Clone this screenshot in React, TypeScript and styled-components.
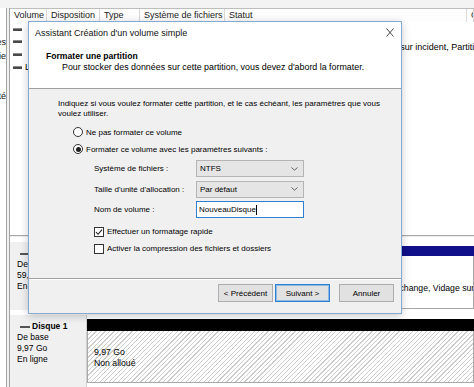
import React from "react";
import styled, { createGlobalStyle } from "styled-components";

const GlobalStyle = createGlobalStyle`
  html, body { margin: 0; padding: 0; background: #fff; }
  body { font-family: "Liberation Sans", Arial, sans-serif; overflow: hidden; }
  * { box-sizing: border-box; }
`;

const Screen = styled.div`
  position: relative;
  width: 474px;
  height: 387px;
  overflow: hidden;
  background: #fff;
  display: flex;
  flex-direction: column;
  color: #000;
  font-size: 9px;
`;

const TopStrip = styled.div`
  height: 8px;
  flex: none;
  background: #f3f3f3;
`;

const Workspace = styled.div`
  flex: 1;
  display: flex;
  min-height: 0;
`;

const TreePane = styled.div`
  width: 7px;
  flex: none;
  background: #fff;
  border-right: 1px solid #a3a3a3;
  overflow: hidden;
  display: flex;
  flex-direction: column;
  align-items: flex-end;
  padding-top: 28px;
`;

const TreeItem = styled.div`
  height: 13.5px;
  line-height: 13.5px;
  white-space: nowrap;
  flex: none;
  color: #111;
`;

const Splitter = styled.div`
  width: 3px;
  flex: none;
  background: #f0f0f0;
  border-right: 1px solid #a3a3a3;
`;

const Content = styled.div`
  flex: 1;
  min-width: 0;
  display: flex;
  flex-direction: column;
`;

const HeaderRow = styled.div`
  height: 14px;
  flex: none;
  display: flex;
  border-top: 1px solid #bdbdbd;
  background: #fdfdfd;
  white-space: nowrap;
  overflow: hidden;
`;

const HeaderCell = styled.div<{ $w?: number }>`
  ${(p) => (p.$w ? `width: ${p.$w}px; flex: none;` : "flex: 1;")}
  padding-left: 4px;
  line-height: 13px;
  border-right: 1px solid #d9d9d9;
  color: #1a1a1a;
  overflow: hidden;
`;

const VolumeList = styled.div`
  height: 213px;
  flex: none;
  background: #fff;
  padding-top: 1px;
  overflow: hidden;
`;

const VolumeRow = styled.div`
  height: 12.6px;
  display: flex;
  align-items: center;
  white-space: nowrap;
`;

const VolCell = styled.div<{ $w?: number; $drop?: number }>`
  ${(p) => (p.$w ? `width: ${p.$w}px; flex: none;` : "flex: 1;")}
  padding-left: 3px;
  overflow: visible;
  display: flex;
  align-items: center;
  gap: 3px;
  ${(p) => (p.$drop ? `padding-top: ${p.$drop}px;` : "")}
`;

const DiskIcon = styled.span`
  display: inline-block;
  width: 9px;
  height: 3px;
  background: #4a4a4a;
  border-top: 1px solid #8a8a8a;
  flex: none;
`;

const PaneDivider = styled.div`
  height: 2px;
  flex: none;
  border-top: 1px solid #a9a9a9;
  background: #ececec;
`;

const DiskPane = styled.div`
  flex: 1;
  min-height: 0;
  background: #fff;
  padding-top: 5px;
  display: flex;
  flex-direction: column;
  gap: 5px;
  overflow: hidden;
`;

const DiskRow = styled.div<{ $h?: number }>`
  display: flex;
  flex: none;
  height: ${(p) => p.$h ?? 72}px;
`;

const DiskLabel = styled.div`
  width: 77px;
  flex: none;
  background: #f0f0f0;
  border-right: 1px solid #d0d0d0;
  padding: 6px 0 0 7px;
  font-size: 8.5px;
  line-height: 11px;
  white-space: nowrap;
  overflow: hidden;
`;

const DiskTitle = styled.div`
  display: flex;
  align-items: center;
  gap: 2px;
  font-weight: bold;
  padding-left: 3px;
`;

const DashIcon = styled.span`
  display: inline-block;
  width: 10px;
  height: 2px;
  background: #555;
`;

const Partitions = styled.div`
  flex: 1;
  min-width: 0;
  display: flex;
  padding-top: 4px;
`;

const Partition = styled.div<{ $w?: number }>`
  ${(p) => (p.$w ? `width: ${p.$w}px; flex: none;` : "flex: 1;")}
  display: flex;
  flex-direction: column;
  min-width: 0;
`;

const PartBar = styled.div<{ $color: string; $h: number }>`
  height: ${(p) => p.$h}px;
  flex: none;
  background: ${(p) => p.$color};
`;

const PartBody = styled.div<{ $hatched?: boolean; $h: number; $pt: number }>`
  height: ${(p) => p.$h}px;
  flex: none;
  border: 1px solid #a8a8a8;
  border-top: none;
  padding: ${(p) => p.$pt}px 0 0 6px;
  font-size: 8.7px;
  line-height: 11px;
  white-space: nowrap;
  overflow: hidden;
  background: ${(p) =>
    p.$hatched
      ? "repeating-linear-gradient(135deg, #ffffff 0px, #ffffff 2.3px, #cdcdcd 2.3px, #cdcdcd 3.2px)"
      : "#fff"};
`;

/* ---------- Dialog ---------- */

const Dialog = styled.div`
  position: absolute;
  left: 28px;
  top: 21px;
  width: 374px;
  height: 293px;
  border: 1px solid #84a9d4;
  background: #f0f0f0;
  box-shadow: 0 2px 8px rgba(0, 0, 0, 0.22);
  display: flex;
  flex-direction: column;
`;

const TitleBar = styled.div`
  height: 21px;
  flex: none;
  background: #fff;
  display: flex;
  align-items: center;
  justify-content: space-between;
  padding: 0 7px 0 6px;
  font-size: 9px;
  color: #111;
`;

const CloseGlyph = styled.svg`
  width: 8px;
  height: 9px;
  display: block;
`;

const WizardHeader = styled.div`
  height: 46px;
  flex: none;
  background: #fff;
  border-bottom: 1px solid #a0a0a0;
  padding: 8px 0 0 17px;
`;

const WizardTitle = styled.div`
  font-weight: bold;
  font-size: 8.6px;
  line-height: 11px;
`;

const WizardSubtitle = styled.div`
  font-size: 8.9px;
  line-height: 11px;
  padding-left: 16px;
`;

const WizardBody = styled.div`
  flex: 1;
  min-height: 0;
  padding: 10px 14px 0 29px;
  font-size: 8px;
  display: flex;
  flex-direction: column;
`;

const Description = styled.div`
  line-height: 9.5px;
`;

const OptionGroup = styled.div<{ $mt: number; $pl: number }>`
  margin-top: ${(p) => p.$mt}px;
  padding-left: ${(p) => p.$pl}px;
  display: flex;
  flex-direction: column;
  gap: 4px;
`;

const OptionRow = styled.label`
  height: 13px;
  display: flex;
  align-items: center;
  gap: 3px;
  white-space: nowrap;
`;

const RadioCircle = styled.span<{ $checked?: boolean }>`
  width: 10px;
  height: 10px;
  border-radius: 50%;
  border: 1px solid #333;
  background: #fff;
  flex: none;
  display: flex;
  align-items: center;
  justify-content: center;
  &::after {
    content: "";
    width: 5px;
    height: 5px;
    border-radius: 50%;
    background: ${(p) => (p.$checked ? "#222" : "transparent")};
  }
`;

const CheckBox = styled.span`
  width: 10px;
  height: 10px;
  border: 1px solid #333;
  background: #fff;
  flex: none;
  display: flex;
  align-items: center;
  justify-content: center;
`;

const FormGrid = styled.div`
  margin-top: 4.5px;
  padding-left: 36px;
  display: grid;
  grid-template-columns: 102px 108px;
  grid-auto-rows: 17px;
  row-gap: 3.5px;
  align-items: center;
  white-space: nowrap;
`;

const Combo = styled.div`
  height: 17px;
  border: 1px solid #b5b5b5;
  background: #e5e5e5;
  display: flex;
  align-items: center;
  justify-content: space-between;
  padding: 0 5px 0 3px;
`;

const TextField = styled.div`
  height: 17px;
  border: 1px solid #2f7fd0;
  background: #fff;
  display: flex;
  align-items: center;
  padding-left: 2px;
`;

const Caret = styled.span`
  display: inline-block;
  width: 1px;
  height: 10px;
  background: #000;
  margin-left: 0.5px;
`;

const Footer = styled.div`
  height: 35px;
  flex: none;
  border-top: 1px solid #a0a0a0;
  box-shadow: inset 0 1px 0 #fff;
  display: flex;
  justify-content: flex-end;
  align-items: flex-start;
  padding: 5px 7px 0 0;
  gap: 2px;
`;

const Button = styled.div<{ $default?: boolean; $gapLeft?: number }>`
  width: 55px;
  height: 18px;
  font-size: 8px;
  background: #e1e1e1;
  border: 1px solid ${(p) => (p.$default ? "#2f7fd0" : "#adadad")};
  box-shadow: ${(p) => (p.$default ? "inset 0 0 0 1px #8dbbe8" : "none")};
  display: flex;
  align-items: center;
  justify-content: center;
  white-space: nowrap;
  margin-left: ${(p) => p.$gapLeft ?? 0}px;
`;

const Chevron = () => (
  <svg width="7" height="4" viewBox="0 0 7 4">
    <path d="M0.5 0.5 L3.5 3.2 L6.5 0.5" fill="none" stroke="#555" strokeWidth="0.9" />
  </svg>
);

const CheckMark = () => (
  <svg width="8" height="8" viewBox="0 0 8 8">
    <path d="M1 4.2 L3.1 6.3 L7 1.6" fill="none" stroke="#222" strokeWidth="1.1" />
  </svg>
);

export default function App() {
  return (
    <>
      <GlobalStyle />
      <Screen>
        <TopStrip />
        <Workspace>
          <TreePane>
            <TreeItem>Services</TreeItem>
            <TreeItem>Stratégie</TreeItem>
            <TreeItem>&nbsp;</TreeItem>
            <TreeItem>&nbsp;</TreeItem>
            <TreeItem>Sécurité</TreeItem>
          </TreePane>
          <Splitter />
          <Content>
            <HeaderRow>
              <HeaderCell $w={37}>Volume</HeaderCell>
              <HeaderCell $w={53}>Disposition</HeaderCell>
              <HeaderCell $w={40}>Type</HeaderCell>
              <HeaderCell $w={85}>Système de fichiers</HeaderCell>
              <HeaderCell $w={242}>Statut</HeaderCell>
              <HeaderCell>Capacité</HeaderCell>
            </HeaderRow>
            <VolumeList>
              <VolumeRow>
                <VolCell $w={37}>
                  <DiskIcon />
                </VolCell>
              </VolumeRow>
              <VolumeRow>
                <VolCell $w={37}>
                  <DiskIcon />
                </VolCell>
                <VolCell $w={53}>Simple</VolCell>
                <VolCell $w={40}>De base</VolCell>
                <VolCell $w={85}>NTFS</VolCell>
                <VolCell $drop={10}>
                  Sain (Démarrer, Fichier d'échange, Vidage sur incident, Partition principale)
                </VolCell>
              </VolumeRow>
              <VolumeRow>
                <VolCell $w={37}>
                  <DiskIcon />
                </VolCell>
              </VolumeRow>
              <VolumeRow>
                <VolCell $w={37}>
                  <DiskIcon />
                  Lecteur
                </VolCell>
              </VolumeRow>
            </VolumeList>
            <PaneDivider />
            <DiskPane>
              <DiskRow $h={68}>
                <DiskLabel>
                  <DiskTitle>
                    <DashIcon />
                    Disque 0
                  </DiskTitle>
                  <div>De base</div>
                  <div>59,51 Go</div>
                  <div>En ligne</div>
                </DiskLabel>
                <Partitions>
                  <Partition $w={202}>
                    <PartBar $color="#10108a" $h={10} />
                    <PartBody $h={53} $pt={4.5}>
                      <div>Réservé au système</div>
                      <div>500 Mo NTFS</div>
                      <div>Sain (Système, Actif, Partition principale)</div>
                    </PartBody>
                  </Partition>
                  <Partition>
                    <PartBar $color="#10108a" $h={10} />
                    <PartBody $h={53} $pt={4.5}>
                      <div>(C:)</div>
                      <div>59,02 Go NTFS</div>
                      <div>Sain (Démarrer, Fichier d'échange, Vidage sur incident, Partition principale)</div>
                    </PartBody>
                  </Partition>
                </Partitions>
              </DiskRow>
              <DiskRow $h={72}>
                <DiskLabel>
                  <DiskTitle>
                    <DashIcon />
                    Disque 1
                  </DiskTitle>
                  <div>De base</div>
                  <div>9,97 Go</div>
                  <div>En ligne</div>
                </DiskLabel>
                <Partitions>
                  <Partition>
                    <PartBar $color="#000" $h={12} />
                    <PartBody $hatched $h={52} $pt={16}>
                      <div>9,97 Go</div>
                      <div>Non alloué</div>
                    </PartBody>
                  </Partition>
                </Partitions>
              </DiskRow>
            </DiskPane>
          </Content>
        </Workspace>

        <Dialog>
          <TitleBar>
            <span>Assistant Création d'un volume simple</span>
            <CloseGlyph viewBox="0 0 8 9">
              <path d="M0.5 0.5 L7.5 8.5 M7.5 0.5 L0.5 8.5" stroke="#333" strokeWidth="0.9" fill="none" />
            </CloseGlyph>
          </TitleBar>
          <WizardHeader>
            <WizardTitle>Formater une partition</WizardTitle>
            <WizardSubtitle>
              Pour stocker des données sur cette partition, vous devez d'abord la formater.
            </WizardSubtitle>
          </WizardHeader>
          <WizardBody>
            <Description>
              Indiquez si vous voulez formater cette partition, et le cas échéant, les paramètres que vous voulez utiliser.
            </Description>
            <OptionGroup $mt={7.5} $pl={15}>
              <OptionRow>
                <RadioCircle />
                Ne pas formater ce volume
              </OptionRow>
              <OptionRow>
                <RadioCircle $checked />
                Formater ce volume avec les paramètres suivants :
              </OptionRow>
            </OptionGroup>
            <FormGrid>
              <span>Système de fichiers :</span>
              <Combo>
                <span>NTFS</span>
                <Chevron />
              </Combo>
              <span>Taille d'unité d'allocation :</span>
              <Combo>
                <span>Par défaut</span>
                <Chevron />
              </Combo>
              <span>Nom de volume :</span>
              <TextField>
                NouveauDisque
                <Caret />
              </TextField>
            </FormGrid>
            <OptionGroup $mt={7} $pl={36}>
              <OptionRow>
                <CheckBox>
                  <CheckMark />
                </CheckBox>
                Effectuer un formatage rapide
              </OptionRow>
              <OptionRow>
                <CheckBox />
                Activer la compression des fichiers et dossiers
              </OptionRow>
            </OptionGroup>
          </WizardBody>
          <Footer>
            <Button>&lt; Précédent</Button>
            <Button $default>Suivant &gt;</Button>
            <Button $gapLeft={7}>Annuler</Button>
          </Footer>
        </Dialog>
      </Screen>
    </>
  );
}
